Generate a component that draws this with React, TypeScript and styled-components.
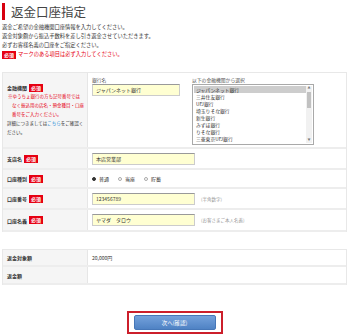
import styled, { createGlobalStyle } from "styled-components";

const GlobalStyle = createGlobalStyle`
    html, body {
        margin: 0;
        padding: 0;
        background: #fff;
    }
    body {
        font-family: "Noto Sans CJK JP", "Noto Sans", sans-serif;
        color: #333;
    }
`;

const Page = styled.div`
    width: 345px;
    padding: 3px 0 0 2px;
`;

const Title = styled.h1`
    margin: 0;
    border-left: 3px solid #d7000f;
    padding-left: 6px;
    font-size: 12.5px;
    font-weight: normal;
    line-height: 17px;
    color: #444;
`;

const Intro = styled.div`
    margin-top: 3px;
    font-size: 5.25px;
    line-height: 9px;
`;

const Line = styled.div`
    height: 9px;
    display: flex;
    align-items: center;
    white-space: nowrap;
`;

const Warn = styled.span`
    color: #e60012;
`;

const Badge = styled.span<{ $gap?: number }>`
    display: inline-block;
    background: #e60012;
    color: #fff;
    font-weight: bold;
    font-size: 5px;
    line-height: 8px;
    padding: 0 2px;
    margin-left: ${(p) => p.$gap ?? 2}px;
    margin-right: 2px;
`;

const Table = styled.div<{ $top: number }>`
    margin-top: ${(p) => p.$top}px;
    border: 1px solid #e8e8e8;
    border-bottom: none;
`;

const Row = styled.div<{ $h: number }>`
    box-sizing: border-box;
    display: grid;
    grid-template-columns: 85px 1fr;
    height: ${(p) => p.$h}px;
    border-bottom: 2px solid #ededed;
`;

const Head = styled.div`
    background: #f5f5f5;
    border-right: 1px solid #e6e6e6;
    padding: 0 3px 0 4px;
    display: flex;
    flex-direction: column;
    justify-content: center;
    font-size: 5px;
    line-height: 9px;
`;

const Label = styled.div`
    font-weight: bold;
    display: flex;
    align-items: center;
`;

const Note = styled.div`
    color: #e60012;
    font-size: 4.5px;
    padding-left: 5px;
    text-indent: -4px;
`;

const Detail = styled.div`
    font-size: 4.5px;
    a {
        color: #1a8ad6;
        text-decoration: none;
    }
`;

const Cell = styled.div<{ $top?: boolean }>`
    padding: ${(p) => (p.$top ? "4px 4px 0" : "0 4px")};
    display: flex;
    align-items: ${(p) => (p.$top ? "flex-start" : "center")};
    font-size: 5px;
`;

const Field = styled.div<{ $w: number }>`
    width: ${(p) => p.$w}px;
    display: flex;
    flex-direction: column;
`;

const SmallLabel = styled.div`
    font-size: 4.8px;
    line-height: 6px;
    color: #555;
    margin-bottom: 1px;
`;

const Input = styled.div<{ $w: number }>`
    box-sizing: border-box;
    width: ${(p) => p.$w}px;
    height: 12px;
    background: #ffffd2;
    border: 1px solid #ccc;
    border-top-color: #999;
    padding-left: 3px;
    font-size: 5px;
    line-height: 10px;
    color: #333;
`;

const Hint = styled.span`
    margin-left: 6px;
    color: #999;
    font-size: 4.5px;
`;

const ListBox = styled.div`
    box-sizing: border-box;
    width: 122px;
    height: 61px;
    border: 1px solid #a9a9a9;
    display: flex;
    padding: 1px;
`;

const Options = styled.div`
    flex: 1;
    overflow: hidden;
`;

const Option = styled.div<{ $sel?: boolean }>`
    height: 7px;
    line-height: 7px;
    font-size: 4.8px;
    padding-left: 2px;
    background: ${(p) => (p.$sel ? "#cdcdcd" : "transparent")};
    white-space: nowrap;
`;

const ScrollBar = styled.div`
    width: 6px;
    background: #f1f1f1;
    display: flex;
    flex-direction: column;
    align-items: center;
    justify-content: space-between;
    position: relative;
`;

const Arrow = styled.span`
    font-size: 3px;
    line-height: 5px;
    color: #777;
`;

const Thumb = styled.div`
    position: absolute;
    top: 6px;
    left: 1px;
    width: 4px;
    height: 16px;
    background: #c1c1c1;
`;

const Radios = styled.div`
    display: flex;
    align-items: center;
    gap: 9px;
    font-size: 5px;
`;

const Radio = styled.label`
    display: flex;
    align-items: center;
    gap: 3px;
`;

const Dot = styled.span<{ $on?: boolean }>`
    box-sizing: border-box;
    width: 4px;
    height: 4px;
    border-radius: 50%;
    border: 0.6px solid ${(p) => (p.$on ? "#333" : "#aaa")};
    background: ${(p) => (p.$on ? "#333" : "#fff")};
`;

const Actions = styled.div`
    display: flex;
    justify-content: center;
    margin-top: 26px;
`;

const Focus = styled.div`
    border: 2px solid #cc1f2b;
    padding: 2px 5px;
`;

const Button = styled.button`
    width: 82px;
    height: 15px;
    border: 1px solid #4677b8;
    border-radius: 2px;
    background: linear-gradient(#74a2dc, #4f82c4);
    color: #fff;
    font-family: inherit;
    font-size: 5.5px;
    padding: 0;
    display: block;
`;

const banks = [
    "ジャパンネット銀行",
    "三井住友銀行",
    "UFJ銀行",
    "埼玉りそな銀行",
    "新生銀行",
    "みずほ銀行",
    "りそな銀行",
    "三菱東京UFJ銀行",
];

function App() {
    return (
        <>
            <GlobalStyle />
            <Page>
                <Title>返金口座指定</Title>
                <Intro>
                    <Line>返金ご希望の金融機関口座情報を入力してください。</Line>
                    <Line>返金対象額から振込手数料を差し引き返金させていただきます。</Line>
                    <Line>必ずお客様名義の口座をご指定ください。</Line>
                    <Line>
                        <Badge $gap={0}>必須</Badge>
                        <Warn>マークのある項目は必ず入力してください。</Warn>
                    </Line>
                </Intro>

                <Table $top={13}>
                    <Row $h={76}>
                        <Head>
                            <Label>
                                金融機関<Badge>必須</Badge>
                            </Label>
                            <Note>※ゆうちょ銀行の方も記号番号ではなく振込用の店名・預金種目・口座番号をご入力ください。</Note>
                            <Detail>
                                詳細につきましては<a href="#">こちら</a>をご確認ください。
                            </Detail>
                        </Head>
                        <Cell $top>
                            <Field $w={100}>
                                <SmallLabel>銀行名</SmallLabel>
                                <Input $w={88}>ジャパンネット銀行</Input>
                            </Field>
                            <Field $w={122}>
                                <SmallLabel>以下の金融機関から選択</SmallLabel>
                                <ListBox>
                                    <Options>
                                        {banks.map((b, i) => (
                                            <Option key={b} $sel={i === 0}>
                                                {b}
                                            </Option>
                                        ))}
                                    </Options>
                                    <ScrollBar>
                                        <Arrow>▲</Arrow>
                                        <Thumb />
                                        <Arrow>▼</Arrow>
                                    </ScrollBar>
                                </ListBox>
                            </Field>
                        </Cell>
                    </Row>
                    <Row $h={21}>
                        <Head>
                            <Label>
                                支店名<Badge>必須</Badge>
                            </Label>
                        </Head>
                        <Cell>
                            <Input $w={103}>本店営業部</Input>
                        </Cell>
                    </Row>
                    <Row $h={19}>
                        <Head>
                            <Label>
                                口座種別<Badge>必須</Badge>
                            </Label>
                        </Head>
                        <Cell>
                            <Radios>
                                <Radio>
                                    <Dot $on />
                                    普通
                                </Radio>
                                <Radio>
                                    <Dot />
                                    当座
                                </Radio>
                                <Radio>
                                    <Dot />
                                    貯蓄
                                </Radio>
                            </Radios>
                        </Cell>
                    </Row>
                    <Row $h={21}>
                        <Head>
                            <Label>
                                口座番号<Badge>必須</Badge>
                            </Label>
                        </Head>
                        <Cell>
                            <Input $w={103}>123456789</Input>
                            <Hint>(半角数字)</Hint>
                        </Cell>
                    </Row>
                    <Row $h={22}>
                        <Head>
                            <Label>
                                口座名義<Badge>必須</Badge>
                            </Label>
                        </Head>
                        <Cell>
                            <Input $w={103}>ヤマダ　タロウ</Input>
                            <Hint>(お客さまご本人名義)</Hint>
                        </Cell>
                    </Row>
                </Table>

                <Table $top={17}>
                    <Row $h={17}>
                        <Head>
                            <Label>返金対象額</Label>
                        </Head>
                        <Cell>20,000円</Cell>
                    </Row>
                    <Row $h={18}>
                        <Head>
                            <Label>返金額</Label>
                        </Head>
                        <Cell />
                    </Row>
                </Table>

                <Actions>
                    <Focus>
                        <Button>次へ(確認)</Button>
                    </Focus>
                </Actions>
            </Page>
        </>
    );
}

export default App;
